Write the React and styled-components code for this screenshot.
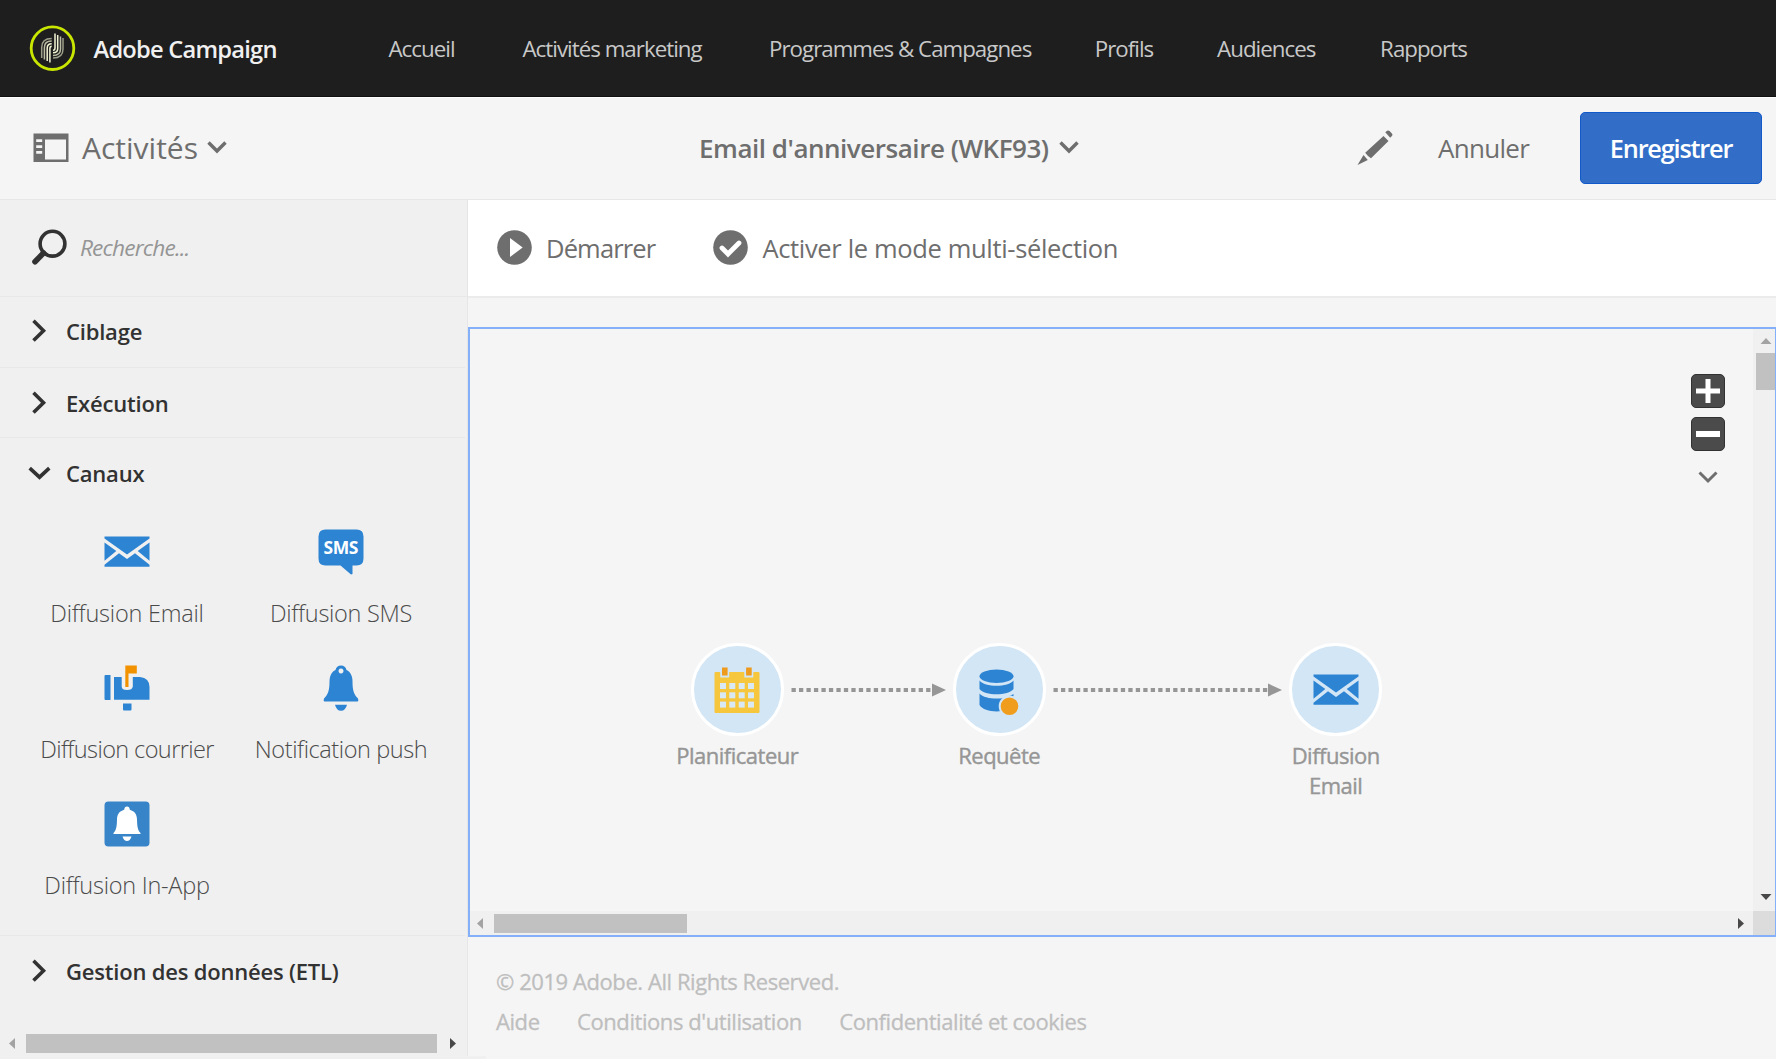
import React from "react";
import styled, { createGlobalStyle, css } from "styled-components";

const GlobalStyle = createGlobalStyle`
  *, *::before, *::after { box-sizing: border-box; }
  body {
    margin: 0;
    background: #f5f5f5;
    font-family: "Open Sans", "Noto Sans", sans-serif;
    color: #6e6e6e;
    overflow: hidden;
  }
  svg { display: block; flex: none; }
`;

const type = (size, weight, tracking) => css`
  font-size: ${size}px;
  font-weight: ${weight};
  letter-spacing: ${tracking}px;
`;

const Page = styled.div`
  width: 1776px;
  height: 1059px;
  display: flex;
  flex-direction: column;
  overflow: hidden;
  white-space: nowrap;
`;

/* ---------- Header ---------- */
const Header = styled.header`
  height: 97px;
  flex: none;
  display: flex;
  align-items: center;
  padding-left: 29px;
  background: #1e1e1e;
  border-bottom: 1px solid #111;
`;
const Brand = styled.div`
  width: 295px;
  margin: 1px 0 0 17.5px;
  ${type(23.7, 600, -0.77)}
  color: #f0f0f0;
`;
const Nav = styled.nav`
  display: flex;
`;
const NavLink = styled.a`
  width: ${(p) => p.$width}px;
  ${type(22.3, 400, -0.98)}
  color: #c8c8c8;
`;

/* ---------- Toolbar ---------- */
const Toolbar = styled.div`
  height: 103px;
  flex: none;
  display: grid;
  grid-template-columns: 699px 1fr auto auto auto;
  align-items: center;
  padding: 0 14px 2px 0;
  background: #f5f5f5;
  border-top: 1px solid #fff;
  border-bottom: 1px solid #e7e7e7;
`;
const PanelToggle = styled.div`
  display: flex;
  align-items: center;
  padding-left: 33px;
  ${type(30, 400, 0)}
`;
const PanelLabel = styled.span`
  width: 125px;
  margin-left: 13px;
`;
const Title = styled.div`
  display: flex;
  align-items: center;
  gap: 10px;
  ${type(26, 600, -0.47)}
`;
const CancelButton = styled.div`
  width: 142px;
  margin-left: 45px;
  ${type(26, 400, -0.7)}
`;
const SaveButton = styled.div`
  width: 182px;
  height: 72px;
  display: flex;
  align-items: center;
  justify-content: center;
  background: #326ec8;
  border: 1px solid #1259c9;
  border-radius: 5px;
  color: #fff;
  ${type(25.3, 600, -1.2)}
`;

/* ---------- Body ---------- */
const Body = styled.div`
  height: 856px;
  flex: none;
  display: flex;
`;
const Sidebar = styled.aside`
  width: 468px;
  flex: none;
  display: flex;
  flex-direction: column;
  background: #f0f0f0;
  border-right: 1px solid #e6e6e6;
`;
const Search = styled.div`
  height: 97px;
  flex: none;
  display: flex;
  align-items: center;
  gap: 13px;
  padding: 0 0 2px 32px;
  border-bottom: 1px solid #e8e8e8;
  ${type(22.7, 400, -0.85)}
  font-style: italic;
  color: #959595;
`;
const Section = styled.section`
  height: ${(p) => p.$height}px;
  flex: none;
  margin-right: 2px;
  border-bottom: ${(p) => (p.$last ? "none" : "1px solid #e8e8e8")};
`;
const SectionHead = styled.div`
  height: ${(p) => p.$height}px;
  display: flex;
  align-items: center;
  padding-left: 28px;
  gap: 15px;
  ${type(22, 600, -0.2)}
  color: #323232;
`;
const Tiles = styled.div`
  display: grid;
  grid-template-columns: 214px 214px;
  grid-auto-rows: 136.2px;
  padding: 21px 0 0 20px;
`;
const Tile = styled.div`
  display: flex;
  flex-direction: column;
  align-items: center;
  gap: 22px;
  ${(p) => type(23.5, 300, p.$tracking)}
  line-height: 32px;
  color: #4b4b4b;
`;
const SmsText = styled.text`
  font-family: "Open Sans", sans-serif;
  ${type(17.5, 700, -0.5)}
  fill: #fff;
`;

/* ---------- Scrollbars ---------- */
const HScroll = styled.div`
  height: ${(p) => p.$height}px;
  flex: 1;
  display: flex;
  align-items: center;
  padding: ${(p) => p.$padding};
  background: #f0f0f0;
`;
const HThumb = styled.div`
  width: ${(p) => p.$width}px;
  height: 19.5px;
  margin: ${(p) => p.$margin};
  background: #c1c1c1;
`;
const VScroll = styled.div`
  width: 22px;
  display: flex;
  flex-direction: column;
  align-items: center;
  padding: 6px 0 8px 3px;
  background: #f0f0f0;
`;
const VThumb = styled.div`
  width: 19px;
  height: 37.5px;
  margin: 6px 0 auto;
  background: #c1c1c1;
`;
const Corner = styled.div`
  width: 22px;
  background: #dcdcdc;
`;

/* ---------- Workspace ---------- */
const Main = styled.main`
  flex: 1;
  min-width: 0;
  display: flex;
  flex-direction: column;
`;
const Actions = styled.div`
  height: 98px;
  flex: none;
  display: flex;
  align-items: center;
  padding: 0 0 1px 29px;
  gap: 58px;
  background: #fff;
  border-bottom: 2px solid #ebebeb;
`;
const Action = styled.div`
  display: flex;
  align-items: center;
  gap: 14px;
  ${(p) => type(25.5, 400, p.$tracking)}
`;
const Canvas = styled.div`
  height: 610px;
  flex: none;
  display: flex;
  flex-direction: column;
  margin-top: 28.5px;
  border: 1px solid #84b0fa;
  border-width: 2px 1px 2px 2px;
`;
const CanvasRow = styled.div`
  flex: 1;
  display: flex;
`;
const CanvasFooter = styled.div`
  height: 24px;
  display: flex;
`;
const Stage = styled.div`
  flex: 1;
  position: relative;
`;
const Node = styled.div`
  position: absolute;
  left: ${(p) => p.$x}px;
  top: 314.5px;
  width: 160px;
  transform: translateX(-50%);
  display: flex;
  flex-direction: column;
  align-items: center;
  gap: 5px;
  ${type(22, 500, -0.5)}
  line-height: 29.7px;
  text-align: center;
  color: #969696;
  -webkit-text-stroke: 0.4px #969696;
`;
const Disc = styled.div`
  width: 93px;
  height: 93px;
  display: flex;
  align-items: center;
  justify-content: center;
  border: 3.5px solid #fff;
  border-radius: 50%;
  background: #d3e6f5;
`;
const Link = styled.svg`
  position: absolute;
  left: ${(p) => p.$x}px;
  top: 354px;
`;
const ZoomControls = styled.div`
  position: absolute;
  right: 28px;
  top: 45px;
  width: 34px;
  display: flex;
  flex-direction: column;
  align-items: center;
  gap: 8.5px;
`;
const ZoomButton = styled.div`
  width: 33.5px;
  height: 34.5px;
  display: flex;
  align-items: center;
  justify-content: center;
  border: 1px solid #323232;
  border-radius: 5px;
  background: #4b4b4b;
`;
const ChevronSlot = styled.div`
  padding-top: 11.5px;
`;
const Footer = styled.footer`
  display: flex;
  flex-direction: column;
  padding: 24.5px 0 0 28px;
  ${type(22, 400, -0.43)}
  line-height: 40.3px;
  color: #bebebe;
  -webkit-text-stroke: 0.3px #bebebe;
`;
const FooterLinks = styled.div`
  display: flex;
  gap: 37.5px;
`;
const Strip = styled.div`
  width: 486px;
  height: 3px;
  background: #f0f0f0;
`;

/* ---------- Icons ---------- */
const Logo = () => (
  <svg width="47" height="47" viewBox="0 0 47 47" fill="none">
    <circle cx="23.5" cy="23.2" r="21.3" stroke="#c8e600" strokeWidth="2.8" />
    <g stroke="#f1f3d2" strokeWidth="1.5">
      <path d="M12.7 33V22.500q0-9 10-9" opacity=".6" />
      <path d="M15.4 34.500V22.500q0-6.500 7.300-6.500" opacity=".75" />
      <path d="M18.2 36V23q0-4.300 4.500-4.300" />
      <path d="M20.900 37.500V23.500q0-2.300 1.800-2.300" />
      <path d="M34 13V24q0 9-10 9" opacity=".6" />
      <path d="M31.500 11.500V24q0 6.500-7.500 6.500" opacity=".75" />
      <path d="M28.700 10V23.500q0 4.300-4.700 4.300" />
      <path d="M26 8.500V23q0 2.300-2 2.300" />
    </g>
  </svg>
);
const PanelIcon = () => (
  <svg width="36" height="30" viewBox="0 0 36 30">
    <path fillRule="evenodd" fill="#6e6e6e" d="M.5 .5h35v28.500H.5zM12 6.500v20h21v-20zM3.200 6.300v2.700h6V6.300zM3.200 12.200v2.700h6v-2.700zM3.200 18v2.700h6v-2.700z" />
  </svg>
);
const Chevron = ({ color = "#6e6e6e", w = 20, h = 13, s = 3.4 }) => (
  <svg width={w} height={h} viewBox={`0 0 ${w} ${h}`} fill="none">
    <path d={`M1.500 1.500L${w / 2} ${h - 3}L${w - 1.5} 1.500`} stroke={color} strokeWidth={s} />
  </svg>
);
const SectionChevron = ({ open }) => (
  <svg width="23" height="24" viewBox="0 0 23 24" fill="none">
    <path d={open ? "M1.700 7.200L11.500 16.200L21.300 7.200" : "M5.500 1.800L15.500 11.700L5.500 21.500"} stroke="#323232" strokeWidth="3.600" />
  </svg>
);
const Pencil = () => (
  <svg width="36" height="36" viewBox="0 0 36 36" fill="#6e6e6e">
    <path d="M28.300 2.200l1.800-1.500q1.300-.8 2.500.4l2.300 2.300q1 1.200 0 2.500l-1.700 1.900zM26.500 6l5 5L14 28.200q-3-1.600-5.800-5.500zM6.500 25l4.300 5L.5 35z" />
  </svg>
);
const SearchIcon = () => (
  <svg width="35" height="36" viewBox="0 0 35 36" fill="none" stroke="#323232">
    <circle cx="20.500" cy="14.700" r="12.400" strokeWidth="3.600" />
    <path d="M11.500 24L3 32.800" strokeWidth="5.600" strokeLinecap="round" />
  </svg>
);
const PlayIcon = () => (
  <svg width="35" height="35" viewBox="0 0 35 35">
    <circle cx="17.500" cy="17.500" r="17.300" fill="#6e6e6e" />
    <path d="M13 8L25.700 17.500L13 27z" fill="#fff" />
  </svg>
);
const CheckIcon = () => (
  <svg width="35" height="35" viewBox="0 0 35 35">
    <circle cx="17.500" cy="17.500" r="17.300" fill="#6e6e6e" />
    <path d="M9 18L15 24L26 13" fill="none" stroke="#fff" strokeWidth="4.800" strokeLinecap="round" />
  </svg>
);
const Envelope = () => (
  <svg width="46" height="46" viewBox="0 0 46 46" fill="#2d84d3">
    <path d="M.5 7.500h45v2L23 25.500L.5 9.500zM.5 13.500L12.300 22L.5 31.800zM45.500 13.500L33.700 22l11.800 9.800zM.5 37.800v-2L15 24.200l8 5.800l8-5.800l14.500 11.600v2z" />
  </svg>
);
const SmsIcon = () => (
  <svg width="46" height="46" viewBox="0 0 46 46">
    <path d="M7.500.5h31q7 0 7 7v22q0 7-7 7h-4V45L33 45.500L22.500 36.500h-15q-7 0-7-7v-22q0-7 7-7z" fill="#2d84d3" />
    <SmsText x="22.700" y="25" textAnchor="middle">SMS</SmsText>
  </svg>
);
const Mailbox = () => (
  <svg width="46" height="46" viewBox="0 0 46 46" fill="#2d84d3">
    <path d="M.5 11q0-1 1-1h5v25h-5q-1 0-1-1zM10 12h7.700v9.500q0 3.500 5.300 3.500t5.800-3.500V12H36q9.500 1 9.500 10v12.800H10zM19 38.500h8.500v6q0 1-1 1H20q-1 0-1-1z" />
    <path d="M21.300.5h11.500v8h-8.300v13.500h-3.200z" fill="#f29200" />
  </svg>
);
const Bell = () => (
  <svg width="46" height="46" viewBox="0 0 46 46" fill="#2d84d3">
    <path fillRule="evenodd" d="M23 .5q4.500 0 5.500 4.500c4 2 6 6 6 11.500 0 9 1.500 13 5.500 17q.8 3-.5 3H6.500q-1.300 0-.5-3c4-4 5.500-8 5.500-17 0-5.500 2-9.500 6-11.500Q18.500.5 23 .5zM23 3.600a2.500 2.500 0 1 0 .01 0zM17 39.700h12q-1.500 6-6 6t-6-6z" />
  </svg>
);
const InApp = () => (
  <svg width="46" height="46" viewBox="0 0 46 46">
    <rect x=".5" y=".5" width="45" height="45" rx="4" fill="#3884c8" />
    <path fill="#fff" d="M23 5.500q2.500 0 2.800 3.300c5 1.500 7 4.500 7.200 9.700.2 8 1 11 3.500 13.500v1h-27v-1c2.500-2.500 3.300-5.500 3.500-13.500.2-5.200 2.200-8.200 7.200-9.700q.3-3.300 2.800-3.300zM18.500 35.500h9q-1.500 4.500-4.500 4.500t-4.500-4.500z" />
  </svg>
);
const Calendar = () => (
  <svg width="46" height="48" viewBox="0 0 46 48">
    <rect x=".5" y="6" width="45" height="41" rx="1" fill="#f6c63c" />
    {[10.7, 34.8].map((x) => (
      <g key={x}>
        <rect x={x - 4.5} y="4" width="9" height="7.500" fill="#d3e6f5" />
        <rect x={x - 2.7} y="1.500" width="5.600" height="8" fill="#ee9a1d" />
      </g>
    ))}
    {[17, 26.3, 35.6].map((y) =>
      [6, 15.3, 24.7, 34].map((x) => <rect key={`${x}-${y}`} x={x} y={y} width="6" height="6" fill="#d9e9f3" />)
    )}
  </svg>
);
const Database = () => (
  <svg width="46" height="50" viewBox="0 0 46 50">
    <g fill="#2d84d3">
      <ellipse cx="20.500" cy="11.200" rx="17" ry="6.800" />
      <path d="M3.500 15.500c5 7 29 7 34 0V24c-5 7-29 7-34 0zM3.500 28.500c5 6 23 6.500 30 2.500q4-2 4-2V40c-5 8.500-29 8.500-34 0z" />
    </g>
    <circle cx="33.500" cy="41.200" r="9.800" fill="#f09c1d" stroke="#d3e6f5" strokeWidth="2" />
  </svg>
);
const Arrow = ({ x, width }) => (
  <Link $x={x} width={width} height="14" viewBox={`0 0 ${width} 14`}>
    <path d={`M.5 7H${width - 13}`} stroke="#969696" strokeWidth="4" strokeDasharray="4.300 3.180" />
    <path d={`M${width - 14} .5L${width} 7L${width - 14} 13.500z`} fill="#969696" />
  </Link>
);
const Caret = ({ dir, dim }) => {
  const d = { left: "M9 1L3 6.500L9 12z", right: "M3 1L9 6.500L3 12z", up: "M.5 9L6 3L11.500 9z", down: "M.5 3L6 9L11.500 3z" }[dir];
  return (
    <svg width="12" height={dir === "left" || dir === "right" ? 13 : 12} fill={dim ? "#a3a3a3" : "#484848"}>
      <path d={d} />
    </svg>
  );
};

const links = [
  ["Accueil", 134],
  ["Activités marketing", 246.5],
  ["Programmes & Campagnes", 325.8],
  ["Profils", 122.3],
  ["Audiences", 163],
  ["Rapports", 100],
];
const channels = [
  ["Diffusion Email", Envelope, -0.22],
  ["Diffusion SMS", SmsIcon, -0.28],
  ["Diffusion courrier", Mailbox, -0.6],
  ["Notification push", Bell, -0.42],
  ["Diffusion In-App", InApp, -0.25],
];

export default function App() {
  return (
    <Page>
      <GlobalStyle />
      <Header>
        <Logo />
        <Brand>Adobe Campaign</Brand>
        <Nav>
          {links.map(([label, width]) => (
            <NavLink key={label} $width={width}>{label}</NavLink>
          ))}
        </Nav>
      </Header>
      <Toolbar>
        <PanelToggle>
          <PanelIcon />
          <PanelLabel>Activités</PanelLabel>
          <Chevron />
        </PanelToggle>
        <Title>
          Email d'anniversaire (WKF93)
          <Chevron />
        </Title>
        <Pencil />
        <CancelButton>Annuler</CancelButton>
        <SaveButton>Enregistrer</SaveButton>
      </Toolbar>
      <Body>
        <Sidebar>
          <Search>
            <SearchIcon />
            Recherche...
          </Search>
          <Section $height={71}>
            <SectionHead $height={68}><SectionChevron />Ciblage</SectionHead>
          </Section>
          <Section $height={70}>
            <SectionHead $height={69}><SectionChevron />Exécution</SectionHead>
          </Section>
          <Section $height={498}>
            <SectionHead $height={70}><SectionChevron open />Canaux</SectionHead>
            <Tiles>
              {channels.map(([label, Icon, tracking]) => (
                <Tile key={label} $tracking={tracking}>
                  <Icon />
                  {label}
                </Tile>
              ))}
            </Tiles>
          </Section>
          <Section $height={94} $last>
            <SectionHead $height={70}><SectionChevron />Gestion des données (ETL)</SectionHead>
          </Section>
          <HScroll $height={26} $padding="1px 0 0 6px">
            <Caret dir="left" dim />
            <HThumb $width={411.5} $margin="0 10px 0 7.5px" />
            <Caret dir="right" />
          </HScroll>
        </Sidebar>
        <Main>
          <Actions>
            <Action $tracking={-0.85}><PlayIcon />Démarrer</Action>
            <Action $tracking={-0.34}><CheckIcon />Activer le mode multi-sélection</Action>
          </Actions>
          <Canvas>
            <CanvasRow>
              <Stage>
                <Arrow x={321} width={155} />
                <Arrow x={583} width={229} />
                <Node $x={267.3}><Disc><Calendar /></Disc>Planificateur</Node>
                <Node $x={529.2}><Disc><Database /></Disc>Requête</Node>
                <Node $x={865.7}><Disc><Envelope /></Disc><div>Diffusion<br />Email</div></Node>
                <ZoomControls>
                  <ZoomButton>
                    <svg width="24" height="24" stroke="#fff" strokeWidth="5"><path d="M0 12H24M12 0V24" /></svg>
                  </ZoomButton>
                  <ZoomButton>
                    <svg width="24" height="24" stroke="#fff" strokeWidth="6"><path d="M0 12H24" /></svg>
                  </ZoomButton>
                  <ChevronSlot><Chevron s={3} /></ChevronSlot>
                </ZoomControls>
              </Stage>
              <VScroll>
                <Caret dir="up" dim />
                <VThumb />
                <Caret dir="down" />
              </VScroll>
            </CanvasRow>
            <CanvasFooter>
              <HScroll $height={24} $padding="2px 6px 0 4px">
                <Caret dir="left" dim />
                <HThumb $width={193} $margin="0 auto 0 8px" />
                <Caret dir="right" />
              </HScroll>
              <Corner />
            </CanvasFooter>
          </Canvas>
          <Footer>
            <div>© 2019 Adobe. All Rights Reserved.</div>
            <FooterLinks>
              <span>Aide</span>
              <span>Conditions d'utilisation</span>
              <span>Confidentialité et cookies</span>
            </FooterLinks>
          </Footer>
        </Main>
      </Body>
      <Strip />
    </Page>
  );
}
